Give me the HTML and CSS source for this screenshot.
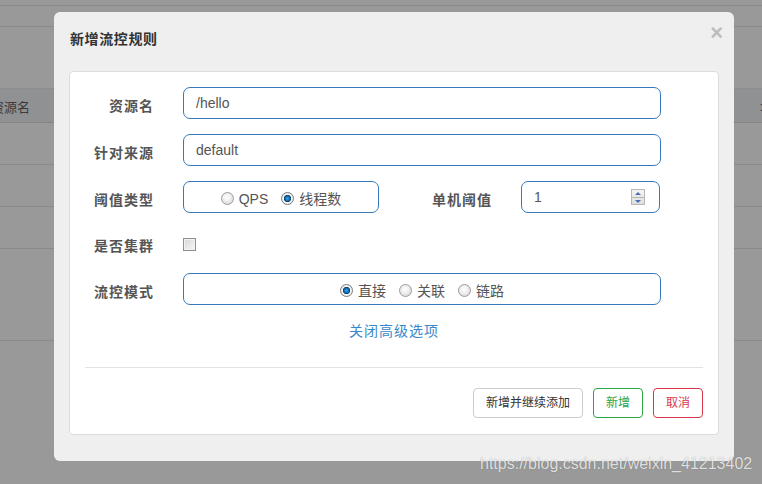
FILE: index.html
```
<!DOCTYPE html>
<html lang="zh-CN">
<head>
<meta charset="utf-8">
<title>新增流控规则</title>
<link rel="stylesheet" href="styles.css">
</head>
<body>
<div class="bg">
  <div class="bg-top"></div>
  <div class="bg-bar"></div>
  <div class="bg-space"></div>
  <div class="bg-head"><span class="bg-col">资源名</span><span class="bg-col-right">:</span></div>
  <div class="bg-row"></div>
  <div class="bg-row"></div>
  <div class="bg-row"></div>
  <div class="bg-row tall"></div>
</div>

<div class="modal">
  <div class="modal-header">
    <span class="modal-title">新增流控规则</span>
    <span class="close">×</span>
  </div>
  <div class="panel">
    <div class="form">
      <label class="label">资源名</label>
      <div class="input">/hello</div>

      <label class="label">针对来源</label>
      <div class="input">default</div>

      <label class="label">阈值类型</label>
      <div class="split">
        <div class="radio-box small">
          <span class="radio"></span><span class="radio-text">QPS</span>
          <span class="radio checked"></span><span class="radio-text">线程数</span>
        </div>
        <label class="label inline">单机阈值</label>
        <div class="input number">1
          <span class="spinner"><span class="spin up"></span><span class="spin down"></span></span>
        </div>
      </div>

      <label class="label">是否集群</label>
      <div class="check-cell"><span class="checkbox"></span></div>

      <label class="label">流控模式</label>
      <div class="radio-box">
        <span class="radio checked"></span><span class="radio-text">直接</span>
        <span class="radio"></span><span class="radio-text">关联</span>
        <span class="radio"></span><span class="radio-text">链路</span>
      </div>
    </div>
    <div class="link-row"><a class="link">关闭高级选项</a></div>
    <div class="divider"></div>
    <div class="footer">
      <button class="btn">新增并继续添加</button>
      <button class="btn success">新增</button>
      <button class="btn danger">取消</button>
    </div>
  </div>
</div>

<div class="watermark">https://blog.csdn.net/weixin_41213402</div>
</body>
</html>
```
FILE: styles.css
```
* { box-sizing: border-box; }
html, body {
  margin: 0;
  padding: 0;
}
body {
  width: 762px;
  height: 484px;
  overflow: hidden;
  position: relative;
  background: #999999;
  font-family: "Liberation Sans", "Noto Sans CJK SC", sans-serif;
}

/* background page under overlay */
.bg { width: 762px; }
.bg-top { height: 6px; border-bottom: 1px solid #8a8a8a; }
.bg-bar { height: 21px; border-bottom: 1px solid #8a8a8a; }
.bg-space { height: 61px; }
.bg-head {
  height: 35px;
  background: #909193;
  border-top: 1px solid #8d8d8d;
  border-bottom: 1px solid #858585;
  display: flex;
  justify-content: space-between;
  align-items: center;
  overflow: hidden;
  font-size: 13px;
  color: #3a3a3a;
  padding-top: 2px;
}
.bg-col { margin-left: -9px; }
.bg-col-right { margin-right: -1px; }
.bg-row { height: 42px; border-bottom: 1px solid #8a8a8a; }
.bg-row.tall { height: 92px; }

/* modal */
.modal {
  position: absolute;
  left: 54px;
  top: 12px;
  width: 680px;
  height: 449px;
  background: #efefef;
  border-radius: 6px;
}
.modal-header {
  position: relative;
  height: 59px;
  padding: 17px 16px 0 16px;
}
.modal-title {
  font-size: 14px;
  font-weight: bold;
  color: #333;
  line-height: 20px;
  letter-spacing: 0.6px;
}
.close {
  position: absolute;
  right: 11px;
  top: 6px;
  font-size: 22px;
  font-weight: bold;
  color: #bdbdbd;
  line-height: 30px;
}
.panel {
  margin: 0 15px;
  height: 364px;
  background: #fff;
  border: 1px solid #dcdcdc;
  border-radius: 4px;
  padding: 15px 15px 0 15px;
}
.form {
  display: grid;
  grid-template-columns: 68px 478px;
  grid-template-rows: 32px 32px 32px 30px 32px;
  column-gap: 30px;
  row-gap: 15px;
  align-items: center;
}
.label {
  text-align: right;
  font-size: 14px;
  font-weight: bold;
  color: #555;
  letter-spacing: 1px;
  white-space: nowrap;
  margin-right: -1px;
  padding-top: 4px;
}
.input {
  height: 32px;
  border: 1px solid #3579ba;
  border-radius: 7px;
  padding: 0 12px;
  font-size: 14px;
  color: #555;
  line-height: 30px;
}
.split {
  display: flex;
  align-items: center;
}
.label.inline {
  width: 113px;
  margin-right: 29px;
}
.input.number {
  width: 139px;
  position: relative;
}
.spinner {
  position: absolute;
  right: 14px;
  top: 7px;
  width: 14px;
  height: 16px;
  border: 1px solid #b8b8b8;
  background: linear-gradient(#f4f4f4, #dedede);
  display: flex;
  flex-direction: column;
}
.spin {
  flex: 1;
  position: relative;
}
.spin.up { border-bottom: 1px solid #b8b8b8; }
.spin::after {
  content: "";
  position: absolute;
  left: 3px;
  top: 2px;
  border-left: 3px solid transparent;
  border-right: 3px solid transparent;
}
.spin.up::after { border-bottom: 3px solid #4a6fb5; }
.spin.down::after { border-top: 3px solid #4a6fb5; top: 2px; }

.radio-box {
  height: 32px;
  border: 1px solid #3579ba;
  border-radius: 7px;
  display: flex;
  align-items: center;
  justify-content: center;
  font-size: 14px;
  color: #555;
  padding-top: 3px;
}
.radio-box.small { width: 196px; }
.radio {
  width: 13px;
  height: 13px;
  border-radius: 50%;
  border: 1px solid #9c9c9c;
  background: radial-gradient(circle at 45% 40%, #ffffff 0, #f2f2f2 35%, #cfcfcf 100%);
  margin-left: 13px;
  flex: none;
}
.radio:first-child { margin-left: 0; }
.radio.checked {
  border-color: #7a7a7a;
  background: radial-gradient(circle at 50% 50%, #3aa5e8 0, #1275c2 2px, #0c3f66 3.3px, #f7f7f7 4px, #dcdcdc 100%);
}
.radio-text {
  margin-left: 5px;
  line-height: 24px;
}
.check-cell { display: flex; align-items: center; padding-top: 2px; }
.checkbox {
  width: 13px;
  height: 13px;
  border: 1px solid #8f8f8f;
  background: linear-gradient(135deg, #d6d6d6, #f8f8f8);
  box-shadow: inset 0 0 0 1px #f2f2f2;
}

.link-row {
  margin-top: 16px;
  text-align: center;
  line-height: 20px;
}
.link {
  font-size: 14px;
  color: #3a87c9;
  letter-spacing: 1px;
}
.divider {
  margin-top: 26px;
  border-top: 1px solid #e3e3e3;
}
.footer {
  margin-top: 20px;
  display: flex;
  justify-content: flex-end;
  gap: 10px;
}
.btn {
  height: 30px;
  padding: 0 12px;
  border: 1px solid #cccccc;
  border-radius: 4px;
  background: #fff;
  font-family: "Liberation Sans", "Noto Sans CJK SC", sans-serif;
  font-size: 12px;
  color: #333;
  line-height: 28px;
}
.btn.success { border-color: #2aa642; color: #2aa642; width: 50px; }
.btn.danger { border-color: #d9374a; color: #d9374a; width: 50px; }

.watermark {
  position: absolute;
  left: 480px;
  top: 455px;
  font-size: 16px;
  color: rgba(255, 255, 255, 0.8);
  text-shadow: 0 0 1px rgba(0, 0, 0, 0.35);
  white-space: nowrap;
}
```
